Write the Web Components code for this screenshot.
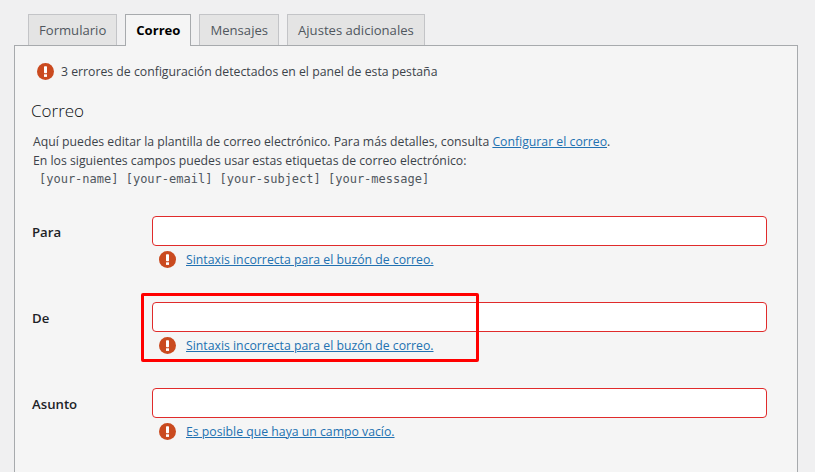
<!DOCTYPE html>
<html lang="es">
<head>
<meta charset="utf-8">
<title>Correo</title>
<style>
    html, body {
        height: 100%;
        margin: 0;
        overflow: hidden;
        background: #f0f0f1;
    }

    body {
        font-family: "Open Sans", "Liberation Sans", sans-serif;
        font-size: 12.25px;
        color: #3c434a;
    }
</style>
</head>
<body>
<form-editor>
    <tab-item>Formulario</tab-item>
    <tab-item active>Correo</tab-item>
    <tab-item>Mensajes</tab-item>
    <tab-item>Ajustes adicionales</tab-item>

    <config-notice slot="panel">3 errores de configuración detectados en el panel de esta pestaña</config-notice>
    <mail-intro slot="panel"></mail-intro>
    <mail-field slot="panel" label="Para" error="Sintaxis incorrecta para el buzón de correo."></mail-field>
    <mail-field slot="panel" label="De" error="Sintaxis incorrecta para el buzón de correo." marked></mail-field>
    <mail-field slot="panel" label="Asunto" error="Es posible que haya un campo vacío."></mail-field>
</form-editor>

<script>
function templateFrom(html) {
    const template = document.createElement("template");
    template.innerHTML = html.trim();
    return template.content;
}

customElements.define("error-icon", class extends HTMLElement {
    constructor() {
        super();
        const shadowRoot = this.attachShadow({ mode: "open" });
        shadowRoot.appendChild(templateFrom(`
            <style>
                :host { display: block; width: 17px; height: 17px; flex: none; }
                svg { display: block; }
            </style>
            <svg width="17" height="17" viewBox="0 0 17 17">
                <circle cx="8.5" cy="8.5" r="8.5" fill="#ca4a1f"/>
                <rect x="7" y="3.2" width="3" height="7" rx="0.7" fill="#fff"/>
                <rect x="7" y="11.3" width="3" height="2.6" fill="#fff"/>
            </svg>
        `));
    }
});

customElements.define("tab-item", class extends HTMLElement {
    constructor() {
        super();
        const shadowRoot = this.attachShadow({ mode: "open" });
        shadowRoot.appendChild(templateFrom(`
            <style>
                :host {
                    display: block;
                    box-sizing: border-box;
                    height: 31px;
                    padding: 0 10px;
                    border: 1px solid #c3c4c7;
                    border-bottom: none;
                    background: #e4e4e4;
                    color: #50575e;
                    font-size: 13.1px;
                    line-height: 31px;
                    white-space: nowrap;
                }
                :host([active]) {
                    height: 32px;
                    margin-bottom: -1px;
                    position: relative;
                    border-color: #a7aaad;
                    background: #f5f5f5;
                    color: #000;
                    font-weight: 700;
                }
            </style>
            <slot></slot>
        `));
    }
});

customElements.define("form-editor", class extends HTMLElement {
    constructor() {
        super();
        const shadowRoot = this.attachShadow({ mode: "open" });
        shadowRoot.appendChild(templateFrom(`
            <style>
                :host {
                    display: flex;
                    flex-direction: column;
                    box-sizing: border-box;
                    height: 100vh;
                    padding: 14px 17px 0 14px;
                }
                .tabs { display: flex; gap: 8px; padding-left: 14px; }
                .panel {
                    flex: 1;
                    min-height: 0;
                    overflow: hidden;
                    padding: 15px 30px 0 17px;
                    border: 1px solid #a7aaad;
                    border-bottom: none;
                    background: #f5f5f5;
                }
            </style>
            <div class="tabs"><slot></slot></div>
            <div class="panel"><slot name="panel"></slot></div>
        `));
    }
});

customElements.define("config-notice", class extends HTMLElement {
    constructor() {
        super();
        const shadowRoot = this.attachShadow({ mode: "open" });
        shadowRoot.appendChild(templateFrom(`
            <style>
                :host {
                    display: flex;
                    align-items: center;
                    gap: 7px;
                    height: 20px;
                    margin-left: 5px;
                }
            </style>
            <error-icon></error-icon>
            <span><slot></slot></span>
        `));
    }
});

customElements.define("mail-intro", class extends HTMLElement {
    constructor() {
        super();
        const shadowRoot = this.attachShadow({ mode: "open" });
        shadowRoot.appendChild(templateFrom(`
            <style>
                :host { display: block; margin-bottom: 27px; }
                h2 {
                    margin: 17px 0 8px -1px;
                    color: #0c0f11;
                    font-size: 17px;
                    font-weight: 300;
                    line-height: 26px;
                }
                p { margin: 0 0 0 1px; line-height: 19px; }
                a { color: #2271b1; }
                code {
                    display: block;
                    margin: 0 0 0 7px;
                    font-family: "DejaVu Sans Mono", "Liberation Mono", monospace;
                    font-size: 12px;
                    line-height: 19px;
                    color: #50575e;
                }
            </style>
            <h2>Correo</h2>
            <p>Aquí puedes editar la plantilla de correo electrónico. Para más detalles, consulta <a href="#">Configurar el correo</a>.<br>
            En los siguientes campos puedes usar estas etiquetas de correo electrónico:</p>
            <code>[your-name] [your-email] [your-subject] [your-message]</code>
        `));
    }
});

customElements.define("mail-field", class extends HTMLElement {
    constructor() {
        super();
        const shadowRoot = this.attachShadow({ mode: "open" });
        shadowRoot.appendChild(templateFrom(`
            <style>
                :host {
                    display: grid;
                    grid-template-columns: 120px 1fr;
                    height: 86px;
                    position: relative;
                }
                label {
                    color: #1d2327;
                    font-size: 13.2px;
                    font-weight: 600;
                    line-height: 32px;
                }
                input {
                    display: block;
                    box-sizing: border-box;
                    width: 100%;
                    height: 30px;
                    margin: 0;
                    border: 1px solid #e02b2b;
                    border-radius: 4px;
                    background: #fff;
                    outline: none;
                }
                .error {
                    display: flex;
                    align-items: center;
                    gap: 10px;
                    height: 20px;
                    margin: 3px 0 0 7px;
                }
                a { color: #2271b1; }
                .mark {
                    display: none;
                    position: absolute;
                    left: 109px;
                    top: -9px;
                    width: 338px;
                    height: 69px;
                    box-sizing: border-box;
                    border: 3px solid #f00;
                    border-radius: 2px;
                }
                :host([marked]) .mark { display: block; }
            </style>
            <label id="label"></label>
            <div>
                <input type="text">
                <div class="error"><error-icon></error-icon><a href="#" id="error"></a></div>
            </div>
            <div class="mark"></div>
        `));
    }

    connectedCallback() {
        this.shadowRoot.getElementById("label").textContent = this.getAttribute("label");
        this.shadowRoot.getElementById("error").textContent = this.getAttribute("error");
    }
});
</script>
</body>
</html>
